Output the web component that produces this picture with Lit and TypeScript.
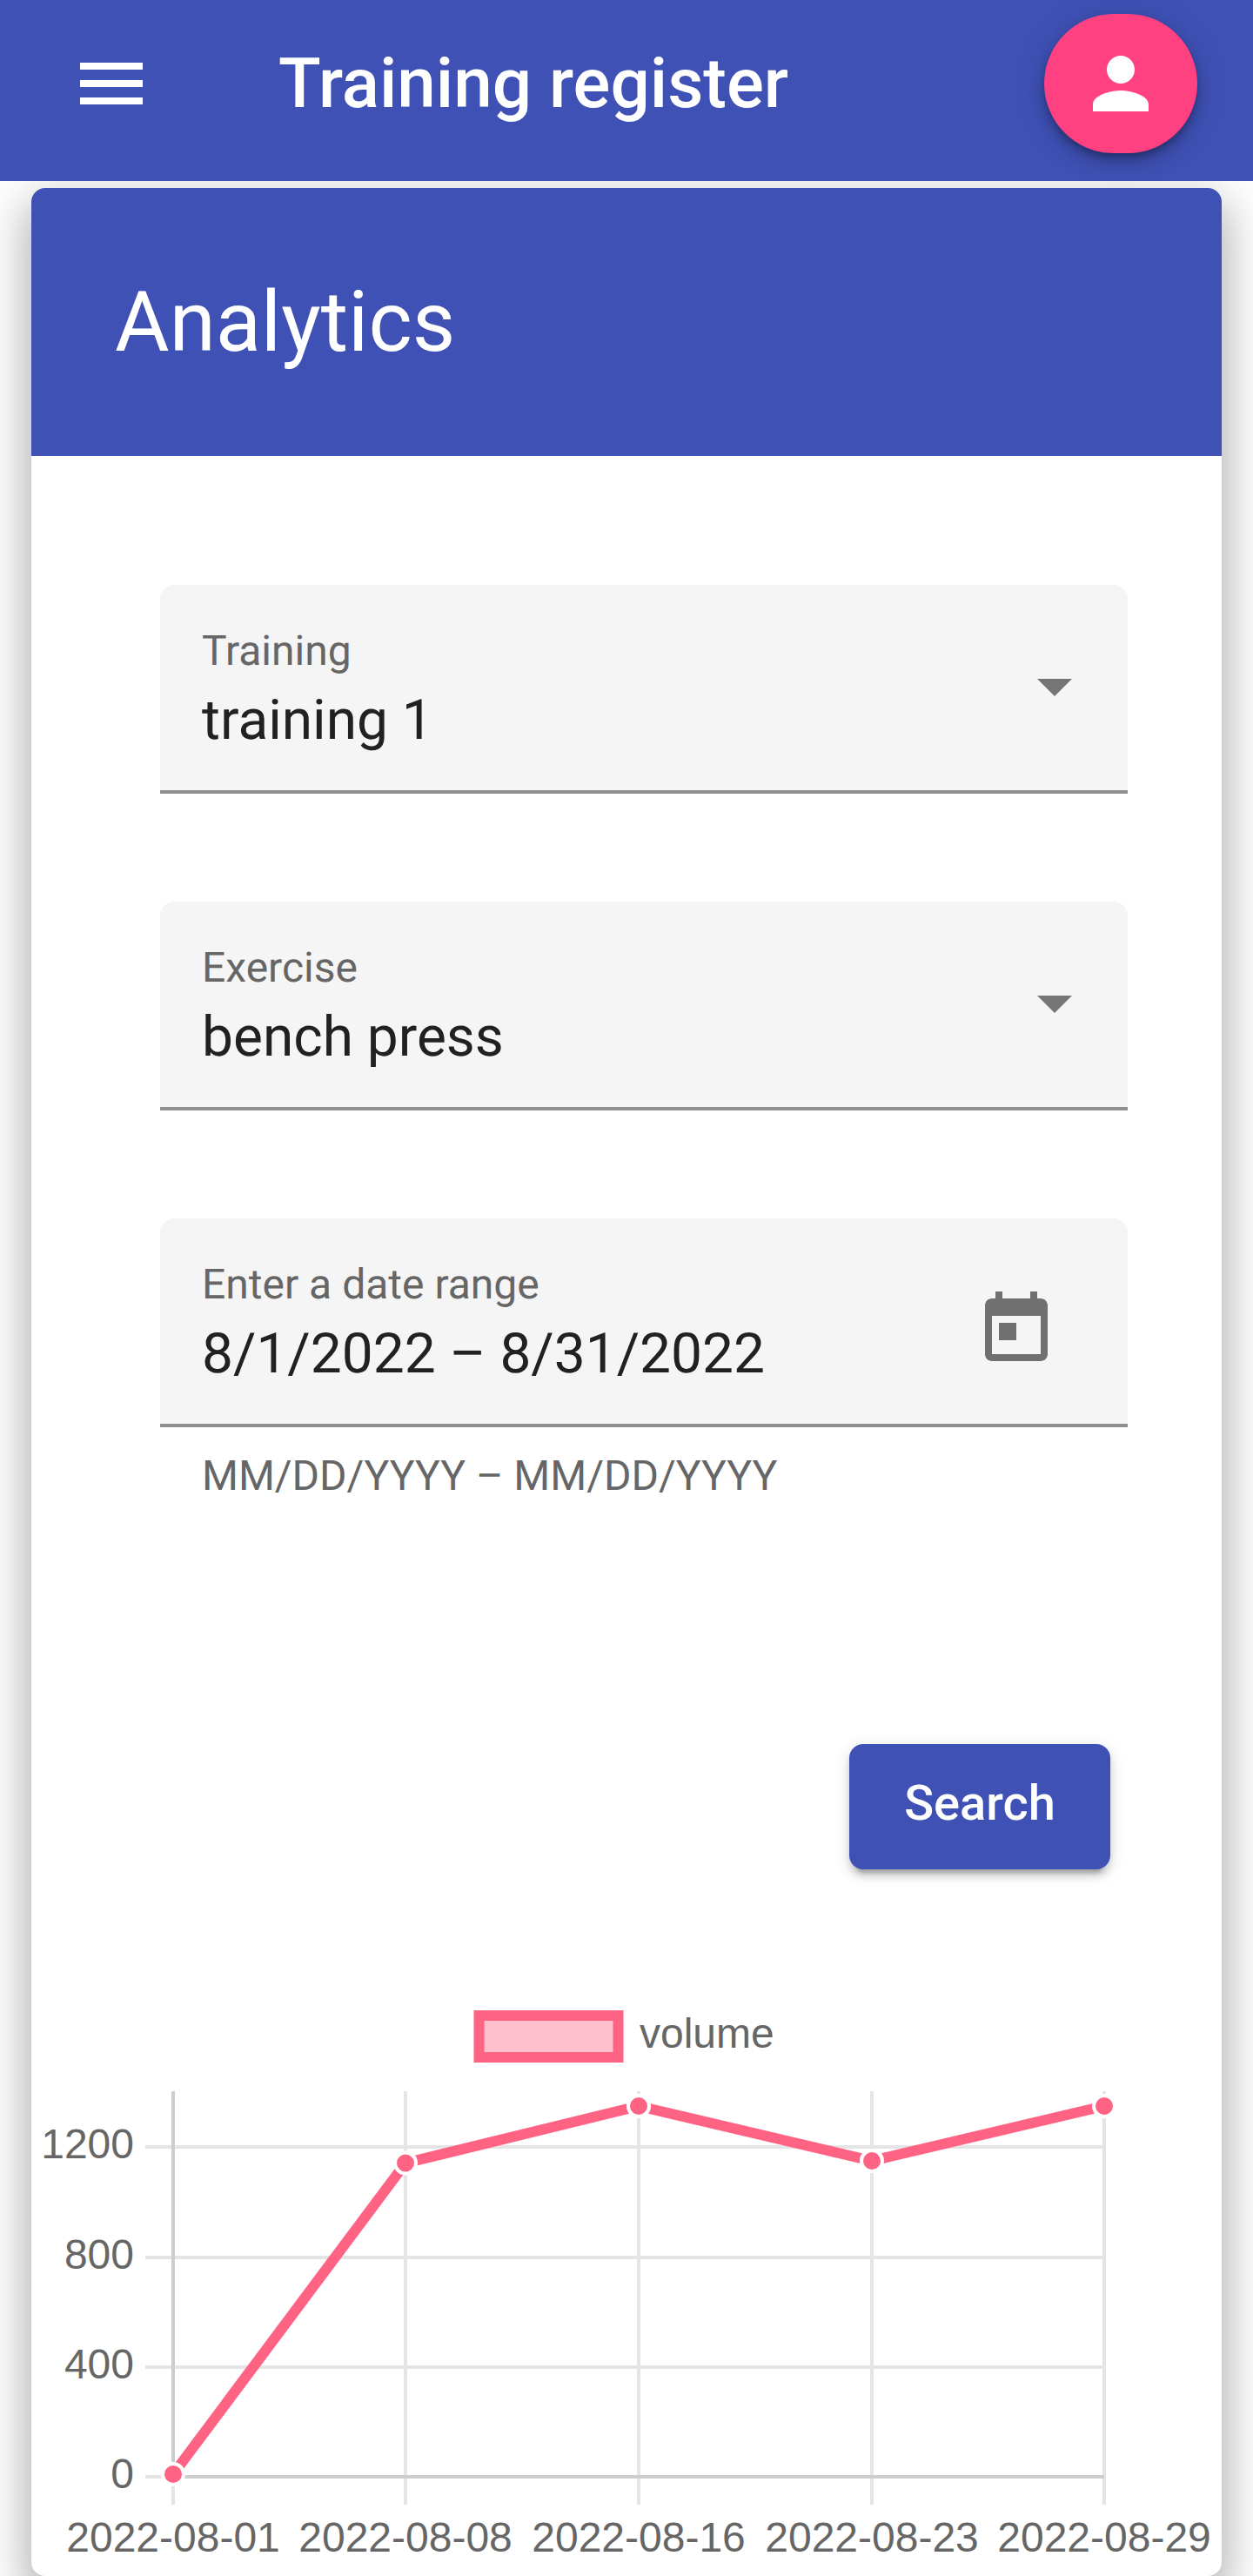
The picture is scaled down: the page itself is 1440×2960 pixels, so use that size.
import { LitElement, css, html, svg } from 'lit'
import { customElement, property } from 'lit/decorators.js'

const ICONS = {
  menu: 'M3 18h18v-2H3v2zm0-5h18v-2H3v2zm0-7v2h18V6H3z',
  person: 'M12 12c2.21 0 4-1.79 4-4s-1.79-4-4-4-4 1.79-4 4 1.79 4 4 4zm0 2c-2.67 0-8 1.34-8 4v2h16v-2c0-2.66-5.33-4-8-4z',
  today: 'M19 3h-1V1h-2v2H8V1H6v2H5c-1.11 0-1.99.9-1.99 2L3 19c0 1.1.89 2 2 2h14c1.1 0 2-.9 2-2V5c0-1.1-.9-2-2-2zm0 16H5V8h14v11zM7 10h5v5H7z',
}

const icon = (d: string) => html`<svg class="icon" viewBox="0 0 24 24"><path d=${d}></path></svg>`

@customElement('form-field')
export class FormField extends LitElement {
  @property({ type: String }) label = ''
  @property({ type: String }) value = ''
  @property({ type: String }) hint = ''
  @property({ type: Boolean }) date = false

  static styles = css`
    :host {
      display: block;
      font-family: Roboto, sans-serif;
      text-rendering: geometricPrecision;
    }

    .box {
      box-sizing: border-box;
      height: 240px;
      padding: 48px 48px 0;
      display: flex;
      justify-content: space-between;
      background: #f5f5f5;
      border-radius: 16px 16px 0 0;
      border-bottom: 4px solid #8f8f8f;
    }

    .label {
      font-size: 48px;
      line-height: 56px;
      color: #666;
    }

    .value {
      font-size: 64px;
      line-height: 72px;
      margin-top: 16px;
      color: #212121;
    }

    .arrow {
      width: 0;
      height: 0;
      margin: 60px 16px 0 0;
      border-left: 20px solid transparent;
      border-right: 20px solid transparent;
      border-top: 20px solid #757575;
    }

    .icon {
      width: 96px;
      height: 96px;
      margin: 32px 32px 0 0;
      fill: #707070;
    }

    .hint {
      padding: 28px 48px 0;
      font-size: 48px;
      line-height: 56px;
      color: #666;
    }
  `

  render() {
    return html`
      <div class="box">
        <div>
          <div class="label">${this.label}</div>
          <div class="value">${this.value}</div>
        </div>
        ${this.date ? icon(ICONS.today) : html`<div class="arrow"></div>`}
      </div>
      ${this.hint ? html`<div class="hint">${this.hint}</div>` : ''}
    `
  }
}

const xs = [199, 466, 734, 1002, 1269]
const ys = [543, 185.5, 120, 183, 120]
const dates = ['2022-08-01', '2022-08-08', '2022-08-16', '2022-08-23', '2022-08-29']
const yTicks = [
  { label: '1200', y: 167 },
  { label: '800', y: 294 },
  { label: '400', y: 420 },
  { label: '0', y: 546 },
]

@customElement('volume-chart')
export class VolumeChart extends LitElement {
  static styles = css`
    :host {
      display: block;
    }

    svg {
      display: block;
    }

    text {
      font-family: 'Liberation Sans', Arial, sans-serif;
      font-size: 48px;
      fill: #666;
    }

    .grid {
      stroke: #e5e5e5;
      stroke-width: 4;
    }

    .axis {
      stroke: #cdcdcd;
      stroke-width: 4;
    }
  `

  render() {
    return html`
      <svg width="1368" height="660" viewBox="36 0 1368 660">
        <rect x="550.5" y="16" width="160" height="48" fill="#ffc0cd" stroke="#ff6384" stroke-width="12"></rect>
        <text x="735" y="53">volume</text>
        ${yTicks.map(
          (t) => svg`
            <line class="grid" x1="167" x2="1269" y1=${t.y} y2=${t.y}></line>
            <text x="154" y=${t.y + 13} text-anchor="end">${t.label}</text>
          `,
        )}
        ${xs.map(
          (x, i) => svg`
            <line class="grid" x1=${x} x2=${x} y1="103" y2="578"></line>
            <text x=${x} y="632" text-anchor="middle">${dates[i]}</text>
          `,
        )}
        <line class="axis" x1="199" x2="199" y1="103" y2="546"></line>
        <line class="axis" x1="199" x2="1269" y1="546" y2="546"></line>
        <polyline fill="none" stroke="#ff6384" stroke-width="12" stroke-linejoin="round"
          points=${xs.map((x, i) => `${x},${ys[i]}`).join(' ')}></polyline>
        ${xs.map(
          (x, i) => svg`<circle cx=${x} cy=${ys[i]} r="12" fill="#ff6384" stroke="#fff" stroke-width="4"></circle>`,
        )}
      </svg>
    `
  }
}

@customElement('app-root')
export class AppRoot extends LitElement {
  static styles = css`
    :host {
      display: block;
      width: 1440px;
      height: 2960px;
      overflow: hidden;
      background: #fff;
      font-family: Roboto, sans-serif;
    }

    .toolbar {
      box-sizing: border-box;
      height: 208px;
      padding: 16px 64px 0 80px;
      display: flex;
      align-items: flex-start;
      background: #3f51b5;
      color: #fff;
      position: relative;
      z-index: 1;
    }

    .toolbar .icon {
      width: 96px;
      height: 96px;
      margin-top: 32px;
      fill: #fff;
    }

    .title {
      flex: 1;
      margin: 0 0 0 144px;
      font-size: 80px;
      line-height: 160px;
      font-weight: 500;
    }

    .fab {
      width: 176px;
      height: 160px;
      display: flex;
      align-items: center;
      justify-content: center;
      border-radius: 80px;
      background: #ff4081;
      box-shadow: 0 6px 10px -2px rgba(0, 0, 0, 0.3), 0 12px 20px rgba(0, 0, 0, 0.14), 0 2px 36px rgba(0, 0, 0, 0.12);
    }

    .fab .icon {
      margin-top: 0;
    }

    .card {
      box-sizing: border-box;
      height: 2744px;
      margin: 8px 36px 0;
      border-radius: 16px;
      background: #fff;
      box-shadow: 0 32px 40px 4px rgba(0, 0, 0, 0.16), 0 12px 56px 12px rgba(0, 0, 0, 0.16);
      overflow: hidden;
    }

    .card-header {
      height: 308px;
      padding-left: 96px;
      display: flex;
      align-items: center;
      background: #3f51b5;
      color: #fff;
    }

    .card-header h2 {
      margin: 0;
      font-size: 96px;
      font-weight: 400;
    }

    .form {
      padding: 148px 108px 0 148px;
      display: flex;
      flex-direction: column;
      gap: 124px;
    }

    .actions {
      display: flex;
      justify-content: flex-end;
      padding: 0 128px 0 0;
      margin-top: 280px;
    }

    .search {
      box-sizing: border-box;
      width: 300px;
      height: 144px;
      padding: 0 0 8px;
      border: none;
      border-radius: 16px;
      background: #3f51b5;
      color: #fff;
      font: 500 56px Roboto, sans-serif;
      box-shadow: 0 12px 4px -8px rgba(0, 0, 0, 0.2), 0 8px 8px rgba(0, 0, 0, 0.14), 0 4px 20px rgba(0, 0, 0, 0.12);
    }

    volume-chart {
      margin-top: 152px;
    }
  `

  render() {
    return html`
      <header class="toolbar">
        ${icon(ICONS.menu)}
        <h1 class="title">Training register</h1>
        <div class="fab">${icon(ICONS.person)}</div>
      </header>
      <section class="card">
        <div class="card-header"><h2>Analytics</h2></div>
        <div class="form">
          <form-field label="Training" value="training 1"></form-field>
          <form-field label="Exercise" value="bench press"></form-field>
          <form-field date label="Enter a date range" value="8/1/2022 – 8/31/2022" hint="MM/DD/YYYY – MM/DD/YYYY"></form-field>
        </div>
        <div class="actions"><button class="search">Search</button></div>
        <volume-chart></volume-chart>
      </section>
    `
  }
}
